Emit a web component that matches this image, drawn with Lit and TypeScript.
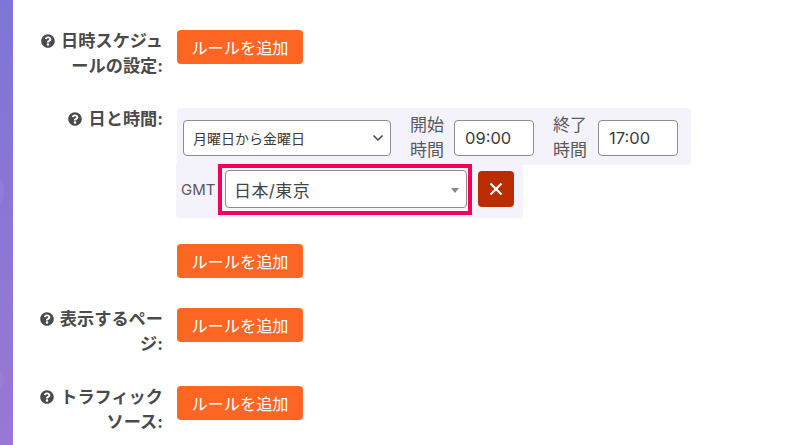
import { LitElement, html, css } from "lit";
import { customElement } from "lit/decorators.js";

const help = html`<svg class="help" viewBox="0 0 512 512" aria-hidden="true"><path fill="currentColor" d="M504 256c0 137-111 248-248 248S8 393 8 256 119 8 256 8s248 111 248 248zM262.700 90c-54.500 0-89.300 23-116.500 63.800-3.500 5.300-2.400 12.400 2.700 16.300l34.700 26.300c5.200 3.900 12.600 3 16.700-2.100 17.900-22.700 30.100-35.800 57.300-35.800 20.400 0 45.700 13.100 45.700 33 0 15-12.400 22.700-32.600 34-23.600 13.200-54.800 29.700-54.800 70.900V300c0 6.600 5.400 12 12 12h56c6.600 0 12-5.400 12-12v-1.300c0-28.600 83.500-29.800 83.500-107.200 0-58.300-60.500-102.500-117.200-102.500zM256 339c-25.500 0-46.200 20.700-46.200 46.200 0 25.500 20.700 46.200 46.200 46.200s46.200-20.700 46.200-46.200c0-25.500-20.700-46.200-46.200-46.200z"/></svg>`;

@customElement("app-root")
export class AppRoot extends LitElement {
  static styles = css`
    :host { display: block; width: 800px; height: 445px; overflow: hidden; background: #fff; font-family: Inter, "Noto Sans CJK JP", sans-serif; color: #4a4a4a; }
    .page { display: flex; height: 445px; }
    .side { position: relative; overflow: hidden; width: 13px; flex: none; background: linear-gradient(180deg, #7e75d6 0%, #9878d2 100%); }
    .blob { position: absolute; left: -12px; width: 16px; height: 30px; border-radius: 50%; background: rgba(255,255,255,.05); }
    .blob.a { top: 176px; }
    .blob.b { top: 372px; height: 16px; }
    .form { padding: 30px 0 0 0; flex: 1; display: flex; flex-direction: column; gap: 30px; }
    .row { display: grid; grid-template-columns: 150px 1fr; column-gap: 14px; align-items: start; }
    .label { text-align: right; font-size: 17.200px; font-weight: 700; line-height: 25px; color: #4a4a4a; margin: -2px 0 0 20px; }
    .help { width: 14px; height: 14px; vertical-align: -1px; margin-right: 2px; color: #4a4a4a; }
    .add { display: block; width: 126px; height: 34px; border: 0; border-radius: 4px; background: #ff6624; color: #fff; font: 400 16.200px Inter, "Noto Sans CJK JP", sans-serif; padding: 0; }
    .rule { display: flex; flex-direction: column; align-items: flex-start; margin-bottom: -4px; }
    .line1 { display: flex; align-items: center; width: 514px; height: 57px; box-sizing: border-box; background: #f4f2fa; border-radius: 4px; padding: 3px 0 0 6px; }
    .sel { position: relative; box-sizing: border-box; width: 208px; height: 36px; background: #fff; border: 1px solid #8b8b90; border-radius: 4px; font-size: 14px; color: #3b3b3b; display: flex; align-items: center; padding-left: 9px; }
    .chev { position: absolute; right: 6px; top: 12px; width: 12px; height: 10px; }
    .cap { font-size: 17px; line-height: 25px; color: #5a5a5a; margin-left: 19px; width: 35px; text-align: left; }
    .time { box-sizing: border-box; width: 80px; height: 36px; margin-left: 9px; background: #fff; border: 1px solid #8b8b90; border-radius: 4px; font-size: 16.500px; color: #3b3b3b; display: flex; align-items: center; padding-left: 10px; }
    .time.end { margin-left: 10px; }
    .line2 { display: flex; align-items: center; width: 347px; height: 57px; box-sizing: border-box; margin: -4px 0 0 -1px; padding-left: 5px; background: #f4f2fa; border-radius: 4px; position: relative; }
    .gmt { font-size: 15px; color: #5a5a5a; width: 37px; }
    .hl { box-sizing: border-box; width: 254px; height: 51px; border: 4px solid #f50057; box-shadow: inset 0 0 0 1px #fff; padding: 2px 1px 0 3px; display: flex; }
    .combo { position: relative; box-sizing: border-box; width: 242px; height: 38px; background: #fff; border: 1px solid #8b8b90; border-radius: 4px; display: flex; align-items: center; padding-left: 8px; font-size: 17px; letter-spacing: .4px; color: #444; }
    .caret { position: absolute; right: 7px; top: 17px; border: 4px solid transparent; border-top: 5px solid #888; border-bottom: 0; }
    .del { box-sizing: border-box; width: 36px; height: 36px; margin: 0 0 2px 6px; border: 0; border-radius: 4px; background: #bb2d00; display: flex; align-items: center; justify-content: center; padding: 0; }
    .del svg { width: 14px; height: 14px; }
  `;

  render() {
    const add = html`<button class="add">ルールを追加</button>`;
    return html`<div class="page">
      <div class="side"><span class="blob a"></span><span class="blob b"></span></div>
      <div class="form">
        <div class="row"><div class="label">${help} 日時スケジュールの設定:</div>${add}</div>
        <div class="row"><div class="label">${help} 日と時間:</div>
          <div class="rule">
            <div class="line1">
              <div class="sel">月曜日から金曜日
                <svg class="chev" viewBox="0 0 12 10"><path d="M1.500 2.500 6 7l4.500-4.500" fill="none" stroke="#444" stroke-width="1.500"/></svg>
              </div>
              <div class="cap">開始時間</div>
              <div class="time">09:00</div>
              <div class="cap">終了時間</div>
              <div class="time end">17:00</div>
            </div>
            <div class="line2">
              <div class="gmt">GMT</div>
              <div class="hl"><div class="combo">日本/東京<span class="caret"></span></div></div>
              <button class="del" aria-label="削除"><svg viewBox="0 0 14 14"><path d="M1.500 1.500l11 11M12.500 1.500l-11 11" stroke="#fff" stroke-width="2.200" fill="none"/></svg></button>
            </div>
          </div>
        </div>
        <div class="row"><div></div>${add}</div>
        <div class="row"><div class="label">${help} 表示するページ:</div>${add}</div>
        <div class="row"><div class="label">${help} トラフィックソース:</div>${add}</div>
      </div>
    </div>`;
  }
}
